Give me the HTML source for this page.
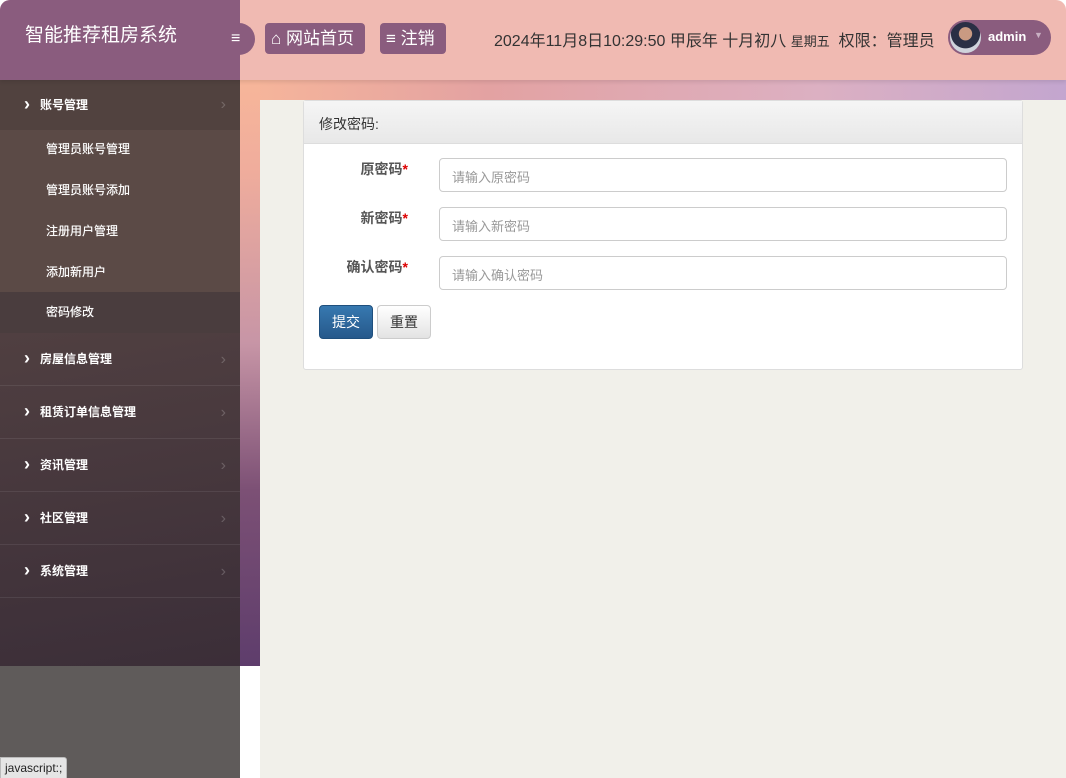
<!DOCTYPE html>
<html><head><meta charset="utf-8"><style>
*{box-sizing:border-box;margin:0;padding:0}
body{width:1066px;height:778px;overflow:hidden;background:#fff;font-family:"Liberation Sans","Noto Sans CJK SC",sans-serif;position:relative}
.page{position:absolute;inset:0;border-radius:10px 10px 0 0;overflow:hidden;background:#fff}
.hdr{position:absolute;left:0;top:0;width:1066px;height:80px;background:#f0bab2;box-shadow:0 2px 4px rgba(0,0,0,.1);z-index:3}
.logo{position:absolute;left:0;top:0;width:240px;height:80px;background:#8a5c7e;color:#fff;font-size:19px;padding:20px 0 0 25px}
.tog{position:absolute;left:225px;top:23px;width:30px;height:32px;border-radius:0 16px 16px 0;background:#8a5c7e;color:#fff;font-size:16px;font-weight:bold;line-height:32px;padding-left:6px}
.btn{position:absolute;top:23px;height:31px;background:#8a5c7e;color:#fff;border-radius:4px;font-size:17px;line-height:31px;padding:0 6px}
.date{position:absolute;left:494px;top:27px;font-size:16px;color:#333}
.user{position:absolute;left:948px;top:20px;width:103px;height:35px;border-radius:18px;background:#8a5c7e;color:#fff;font-size:13px;font-weight:bold}
.av{position:absolute;left:2px;top:2px;width:31px;height:31px;border-radius:50%;background:radial-gradient(circle at 50% 38%,#c99a82 0 26%,#2a2f45 28% 58%,#cfd3dc 60%)}
.side{position:absolute;left:0;top:80px;width:240px;height:586px;background:linear-gradient(170deg,#5e4b47,#3b2e38)}
.strip{position:absolute;left:240px;top:80px;width:20px;height:586px;background:linear-gradient(180deg,#f7b69a 0%,#f0ad9c 15%,#c795a6 45%,#7c5075 70%,#5e3d6c 100%)}
.top{position:absolute;left:240px;top:80px;width:826px;height:20px;background:linear-gradient(90deg,#f7b69a,#e3a2a2 30%,#dcb0c2 70%,#c3a6cf)}
.main{position:absolute;left:260px;top:100px;width:806px;height:678px;background:#f1f0ea}
.low{position:absolute;left:0;top:666px;width:240px;height:112px;background:#5f5b5a}
.m{position:absolute;left:0;width:240px;color:#fff;font-size:12px;font-weight:bold}
.m1{height:53px;line-height:53px;padding-left:40px;border-bottom:1px solid rgba(255,255,255,.08)}
.m1:before{content:"›";position:absolute;left:24px;font-size:18px;top:-1px}
.m1:after{content:"›";position:absolute;right:14px;color:rgba(255,255,255,.2);font-size:16px;font-weight:normal}
.s{height:41px;line-height:41px;padding-left:46px;font-weight:normal;text-shadow:0 0 .5px #fff}
.panel{position:absolute;left:303px;top:100px;width:720px;height:270px;background:#fff;border:1px solid #ddd;border-radius:3px}
.ph{height:43px;background:linear-gradient(#f5f5f5,#e8e8e8);border-bottom:1px solid #ddd;font-size:14px;color:#333;padding:13px 15px}
.lab{position:absolute;right:614px;font-size:14px;font-weight:bold;color:#555}
.lab i{color:#d00;font-style:normal}
.inp{position:absolute;left:135px;width:568px;height:34px;border:1px solid #ccc;border-radius:4px;font-size:13px;color:#999;padding:8px 12px}
.b{position:absolute;top:204px;height:34px;border-radius:4px;font-size:14px;line-height:32px;text-align:center}
</style></head><body><div class="page">
<div class="main"></div><div class="top"></div><div class="strip"></div>
<div class="side">
<div class="m m1" style="top:0;height:50px;line-height:50px;background:#51423f;border:none">账号管理</div>
<div style="position:absolute;left:0;top:50px;width:240px;height:202px;background:#5b4a46"></div>
<div class="m s" style="top:49px">管理员账号管理</div>
<div class="m s" style="top:90px">管理员账号添加</div>
<div class="m s" style="top:131px">注册用户管理</div>
<div class="m s" style="top:172px">添加新用户</div>
<div class="m s" style="top:212px;background:#4a3d3e">密码修改</div>
<div class="m m1" style="top:253px">房屋信息管理</div>
<div class="m m1" style="top:306px">租赁订单信息管理</div>
<div class="m m1" style="top:359px">资讯管理</div>
<div class="m m1" style="top:412px">社区管理</div>
<div class="m m1" style="top:465px">系统管理</div>
</div>
<div class="low"></div>
<div style="position:absolute;left:0;top:757px;padding:3px 4px;background:#e5e5e5;border:1px solid #bbb;border-radius:0 3px 0 0;font-size:12px;color:#222">javascript:;</div>
<div class="hdr">
<div class="logo">智能推荐租房系统</div>
<div class="tog">≡</div>
<div class="btn" style="left:265px;width:100px">⌂ 网站首页</div>
<div class="btn" style="left:380px;width:66px"><b>≡</b> 注销</div>
<div class="date">2024年11月8日10:29:50 甲辰年 十月初八 <span style="font-size:13px">星期五</span>&nbsp; 权限：管理员</div>
<div class="user"><div class="av"></div><span style="position:absolute;left:40px;top:9px">admin</span><span style="position:absolute;left:86px;top:10px;color:#c9b0c3;font-size:9px">▼</span></div>
</div>
<div class="panel">
<div class="ph">修改密码:</div>
<div class="lab" style="top:58px">原密码<i>*</i></div><div class="inp" style="top:57px">请输入原密码</div>
<div class="lab" style="top:107px">新密码<i>*</i></div><div class="inp" style="top:106px">请输入新密码</div>
<div class="lab" style="top:156px">确认密码<i>*</i></div><div class="inp" style="top:155px">请输入确认密码</div>
<div class="b" style="left:15px;width:54px;background:linear-gradient(#3779b0,#26598b);border:1px solid #1f4f7d;color:#fff">提交</div>
<div class="b" style="left:73px;width:54px;background:linear-gradient(#fff,#e3e3e3);border:1px solid #ccc;color:#333">重置</div>
</div>
</div></body></html>
